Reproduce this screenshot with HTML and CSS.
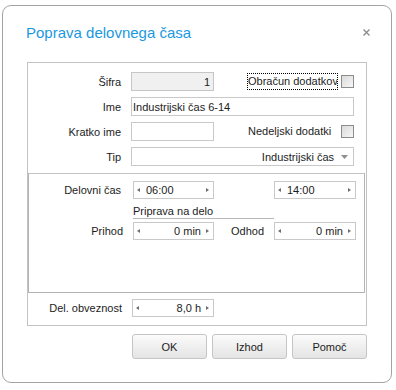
FILE: index.html
```html
<!DOCTYPE html>
<html lang="sl">
<head>
<meta charset="utf-8">
<title>Poprava delovnega časa</title>
<link rel="stylesheet" href="styles.css">
</head>
<body>
<div class="dialog">
  <div class="header">
    <span class="title">Poprava delovnega časa</span>
    <svg class="close" width="7" height="7" viewBox="0 0 7 7"><path d="M0.5 0.5L6.5 6.5M6.5 0.5L0.5 6.5" stroke="#8a8a8a" stroke-width="1.3" fill="none"/></svg>
  </div>
  <div class="panel">
    <div class="top">
      <div class="row">
        <span class="lbl">Šifra</span>
        <span class="field code">1</span>
        <span class="chklbl focus">Obračun dodatkov</span>
        <span class="cb"></span>
      </div>
      <div class="row">
        <span class="lbl">Ime</span>
        <span class="field wide">Industrijski čas 6-14</span>
      </div>
      <div class="row">
        <span class="lbl">Kratko ime</span>
        <span class="field code"></span>
        <span class="chklbl">Nedeljski dodatki</span>
        <span class="cb"></span>
      </div>
      <div class="row">
        <span class="lbl">Tip</span>
        <span class="field wide select"><span class="selval">Industrijski čas</span><svg class="dd" width="7" height="4" viewBox="0 0 7 4"><path d="M0 0H7L3.5 4Z" fill="#8f8f8f"/></svg></span>
      </div>
    </div>
    <div class="inner">
      <div class="srow">
        <span class="lbl2 lbl2-a">Delovni čas</span>
        <span class="spin"><span class="al"></span><span class="val">06:00</span><span class="ar"></span></span>
        <span class="spin spin-r"><span class="al"></span><span class="val">14:00</span><span class="ar"></span></span>
      </div>
      <div class="prip">Priprava na delo</div>
      <div class="srow">
        <span class="lbl2">Prihod</span>
        <span class="spin"><span class="al"></span><span class="val num">0 min</span><span class="ar"></span></span>
        <span class="lbl3">Odhod</span>
        <span class="spin"><span class="al"></span><span class="val num">0 min</span><span class="ar"></span></span>
      </div>
    </div>
    <div class="bottom">
      <div class="srow">
        <span class="lbl4">Del. obveznost</span>
        <span class="spin spin-b"><span class="al"></span><span class="val num">8,0 h</span><span class="ar"></span></span>
      </div>
    </div>
  </div>
  <div class="btns">
    <span class="btn">OK</span>
    <span class="btn">Izhod</span>
    <span class="btn">Pomoč</span>
  </div>
</div>
</body>
</html>
```

FILE: styles.css
```css
* { box-sizing: border-box; }
html, body { margin: 0; padding: 0; background: #fff; }
body {
  font-family: "Liberation Sans", Arial, sans-serif;
  font-size: 11px;
  color: #1c1c1c;
}
.dialog {
  margin: 5px 0 0 2px;
  width: 390px;
  height: 378px;
  border: 1px solid #a3a3a3;
  border-radius: 9px;
  background: #fff;
}
.header {
  height: 56px;
  display: flex;
  justify-content: space-between;
  align-items: flex-start;
  padding: 18px 21px 0 23px;
}
.title {
  font-size: 15px;
  line-height: 18px;
  color: #1b98e0;
}
.close { margin-top: 5px; }
.panel {
  margin: 0 24px;
  border: 1px solid #c3c3c3;
}
.top {
  padding: 9px 12px 7px 0;
  display: flex;
  flex-direction: column;
  gap: 6px;
}
.row {
  display: flex;
  align-items: center;
  height: 19px;
}
.lbl {
  flex: none;
  width: 93px;
  margin-right: 10px;
  text-align: right;
}
.field {
  flex: none;
  height: 19px;
  border: 1px solid #c9c9c9;
  background: #fff;
  display: flex;
  align-items: center;
  padding: 0 1px;
  white-space: nowrap;
}
.code {
  width: 83px;
  justify-content: flex-end;
  padding-right: 3px;
}
.row:first-child .code { background: #f0f0f0; border-color: #c6c6c6; }
.wide { width: 223px; }
.select {
  justify-content: flex-end;
  padding-right: 5px;
}
.selval { margin-right: 7px; }
.chklbl {
  flex: none;
  width: 91px;
  height: 17px;
  margin-left: 33px;
  border: 1px solid transparent;
  padding-left: 0;
  line-height: 15px;
  white-space: nowrap;
  overflow: hidden;
}
.focus { border: 1px dotted #000; }
.cb {
  flex: none;
  width: 13px;
  height: 13px;
  margin-left: 3px;
  border: 1px solid #8c8c8c;
  background: linear-gradient(135deg, #dadada, #f7f7f7);
}
.inner {
  margin-right: 1px;
  height: 120px;
  border: 1px solid #b4b4b4;
  border-top-color: #c3c3c3;
  padding: 7px 8px 0 0;
}
.srow {
  display: flex;
  align-items: center;
  height: 18px;
}
.lbl2 {
  flex: none;
  width: 94px;
  margin-right: 10px;
  text-align: right;
}
.lbl2-a { padding-right: 2px; }
.lbl3 {
  margin-left: auto;
  margin-right: 10px;
}
.lbl4 {
  flex: none;
  width: 94px;
  margin-right: 10px;
  text-align: right;
}
.spin {
  flex: none;
  width: 81px;
  height: 18px;
  border: 1px solid #c9c9c9;
  display: flex;
  align-items: center;
  padding: 0 4px 0 3px;
}
.srow .spin:last-child { width: 82px; }
.spin-r { margin-left: auto; }
.spin-b { width: 82px; }
.al, .ar {
  flex: none;
  width: 0;
  height: 0;
  border-top: 2.5px solid transparent;
  border-bottom: 2.5px solid transparent;
}
.al { border-right: 3px solid #6e6e6e; }
.ar { border-left: 3px solid #6e6e6e; }
.val {
  flex: 1;
  padding-left: 6px;
  white-space: nowrap;
}
.val.num {
  text-align: right;
  padding-left: 0;
  padding-right: 5px;
}
.prip {
  margin-left: 104px;
  width: 141px;
  padding-top: 6px;
  line-height: 13px;
  border-bottom: 1px solid #b8b8b8;
  margin-bottom: 3px;
}
.bottom {
  padding: 6px 0 8px 0;
}
.btns {
  display: flex;
  justify-content: flex-end;
  gap: 5px;
  margin: 8px 24px 0;
}
.btn {
  width: 75px;
  height: 25px;
  border: 1px solid #c5c5c5;
  border-radius: 3px;
  background: linear-gradient(#fbfbfb, #e4e4e4);
  display: flex;
  align-items: center;
  justify-content: center;
}
```
